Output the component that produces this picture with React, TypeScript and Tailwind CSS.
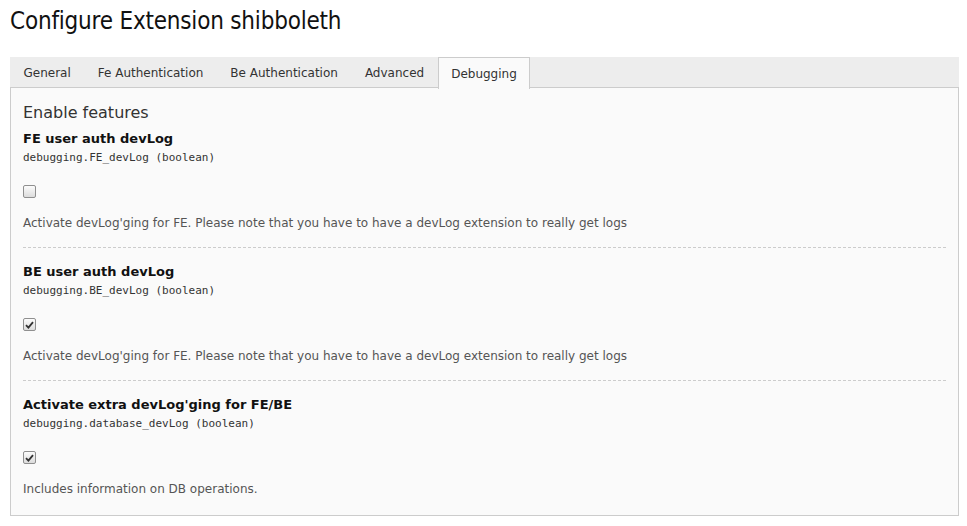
import React from "react";

const tabs = ["General", "Fe Authentication", "Be Authentication", "Advanced", "Debugging"];

interface Field {
    title: string;
    key: string;
    checked: boolean;
    description: string;
}

const fields: Field[] = [
    {
        title: "FE user auth devLog",
        key: "debugging.FE_devLog (boolean)",
        checked: false,
        description: "Activate devLog'ging for FE. Please note that you have to have a devLog extension to really get logs",
    },
    {
        title: "BE user auth devLog",
        key: "debugging.BE_devLog (boolean)",
        checked: true,
        description: "Activate devLog'ging for FE. Please note that you have to have a devLog extension to really get logs",
    },
    {
        title: "Activate extra devLog'ging for FE/BE",
        key: "debugging.database_devLog (boolean)",
        checked: true,
        description: "Includes information on DB operations.",
    },
];

function Checkbox({ checked }: { checked: boolean }) {
    return (
        <div className="w-[13px] h-[13px] rounded-[2px] border border-[#8f8f8f] bg-gradient-to-b from-[#fcfcfc] to-[#dcdcdc] flex items-center justify-center">
            {checked && (
                <svg width="9" height="8" viewBox="0 0 9 8">
                    <path d="M1 4.2 L3.4 6.6 L8 1.2" fill="none" stroke="#333" strokeWidth="1.8" />
                </svg>
            )}
        </div>
    );
}

export default function App() {
    return (
        <div className="bg-white w-[967px] h-[526px] px-[10px] pt-[5px] font-['DejaVu_Sans',sans-serif] text-[#333]">
            <h1 className="text-[24px] leading-[32px] text-[#111] font-['DejaVu_Sans_Condensed','DejaVu_Sans',sans-serif] tracking-[-0.2px]">
                Configure Extension shibboleth
            </h1>

            <div className="mt-[20px] w-[949px]">
                <div className="flex h-[31px] bg-[#ededed] border-b border-[#cccccc]">
                    {tabs.map((t) => (
                        <div
                            key={t}
                            className={
                                t === "Debugging"
                                    ? "px-[12.5px] h-[32px] -mb-px flex items-center text-[12px] bg-[#fafafa] border border-b-0 border-[#cccccc] text-[#333]"
                                    : "px-[12.5px] h-[31px] flex items-center text-[12px] text-[#333] border border-transparent"
                            }
                        >
                            {t}
                        </div>
                    ))}
                </div>

                <div className="bg-[#fafafa] border border-t-0 border-[#cccccc] h-[428px] px-[12px] pt-[15px]">
                    <div className="text-[16px] leading-[20px] text-[#333]">Enable features</div>
                    {fields.map((f, i) => (
                        <div key={f.key} className={i < fields.length - 1 ? "border-b border-dashed border-[#cccccc] pb-[16px] mb-[15px]" : ""}>
                            <div className={"text-[13px] font-bold leading-[18px] text-[#111] " + (i === 0 ? "mt-[7px]" : "")}>{f.title}</div>
                            <div className="font-['DejaVu_Sans_Mono',monospace] text-[11px] leading-[16px] mt-[2px] text-[#333]">{f.key}</div>
                            <div className="mt-[19px]">
                                <Checkbox checked={f.checked} />
                            </div>
                            <div className="mt-[17px] text-[12px] leading-[16px] text-[#555]">{f.description}</div>
                        </div>
                    ))}
                </div>
            </div>
        </div>
    );
}
